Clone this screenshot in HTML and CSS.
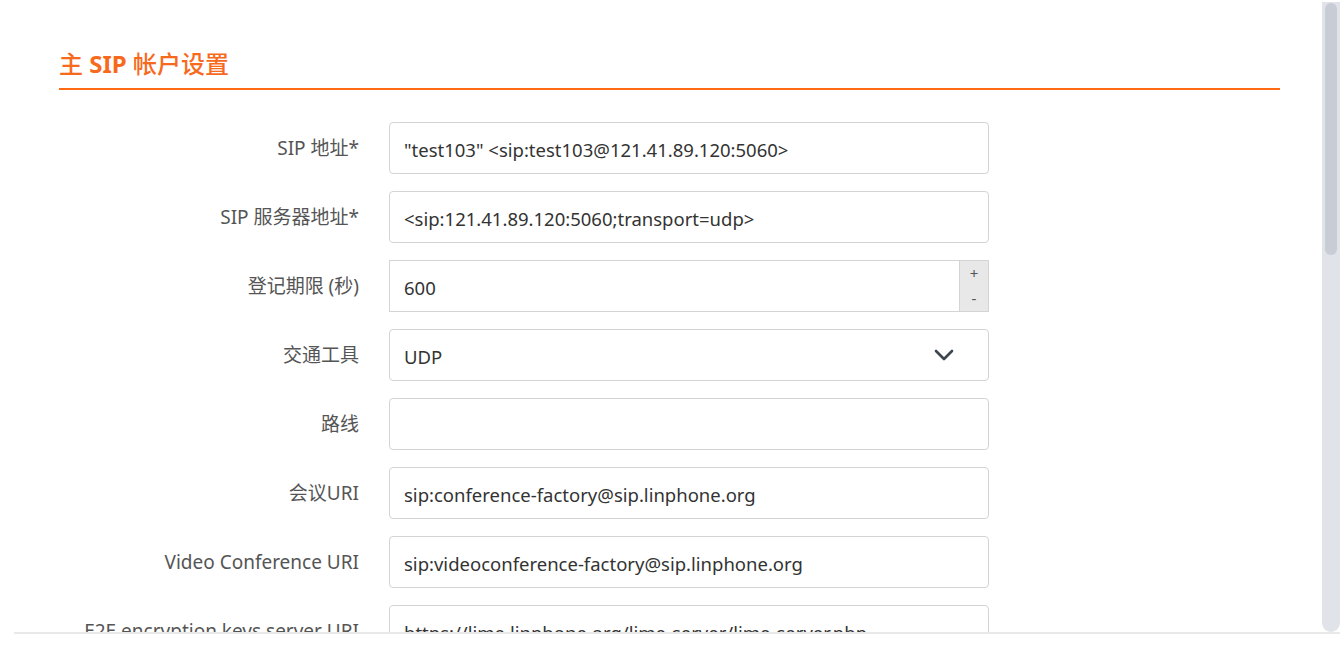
FILE: index.html
```html
<!DOCTYPE html>
<html lang="zh-CN">
<head>
    <meta charset="UTF-8">
    <title>主 SIP 帐户设置</title>
    <link rel="stylesheet" href="styles.css">
</head>
<body>
    <div class="frame">
        <div class="panel">
            <h2 class="section-title">主 <b>SIP</b> 帐户设置</h2>

            <div class="form">
                <div class="row">
                    <label class="label">SIP 地址*</label>
                    <div class="field"><span class="value">"test103" &lt;sip:test103@121.41.89.120:5060&gt;</span></div>
                </div>
                <div class="row">
                    <label class="label">SIP 服务器地址*</label>
                    <div class="field"><span class="value">&lt;sip:121.41.89.120:5060;transport=udp&gt;</span></div>
                </div>
                <div class="row">
                    <label class="label">登记期限 (秒)</label>
                    <div class="field field-number">
                        <span class="value">600</span>
                        <div class="spin">
                            <span>+</span>
                            <span>-</span>
                        </div>
                    </div>
                </div>
                <div class="row">
                    <label class="label">交通工具</label>
                    <div class="field field-select">
                        <span class="value">UDP</span>
                        <svg class="chevron" width="20" height="12" viewBox="0 0 20 12">
                            <path d="M2 2 L10 10 L18 2" fill="none" stroke="#3c4650" stroke-width="2.6" stroke-linecap="round" stroke-linejoin="round"/>
                        </svg>
                    </div>
                </div>
                <div class="row">
                    <label class="label">路线</label>
                    <div class="field"></div>
                </div>
                <div class="row">
                    <label class="label">会议URI</label>
                    <div class="field"><span class="value">sip:conference-factory@sip.linphone.org</span></div>
                </div>
                <div class="row">
                    <label class="label">Video Conference URI</label>
                    <div class="field"><span class="value">sip:videoconference-factory@sip.linphone.org</span></div>
                </div>
                <div class="row">
                    <label class="label">E2E encryption keys server URI</label>
                    <div class="field"><span class="value">https://lime.linphone.org/lime-server/lime-server.php</span></div>
                </div>
            </div>
        </div>
        <div class="scrollbar">
            <div class="thumb"></div>
        </div>
    </div>
</body>
</html>
```

FILE: styles.css
```css
body {
    margin: 0;
    background: #fff;
    font-family: "Noto Sans", "Noto Sans CJK SC", sans-serif;
}
.frame {
    display: flex;
    margin-left: 14px;
    width: 1326px;
    height: 634px;
    overflow: hidden;
    border-bottom: 2px solid #e9e9e9;
    box-sizing: border-box;
}
.panel {
    flex: 1;
    padding: 0 42px 0 45px;
}
.section-title {
    margin: 49px 0 0;
    padding-bottom: 9px;
    font-size: 24px;
    line-height: 30px;
    font-weight: 500;
    color: #f76a1e;
    border-bottom: 2px solid #ff6a12;
}
.section-title b {
    font-weight: 700;
}
.form {
    padding-top: 32px;
}
.row {
    display: flex;
    align-items: center;
    margin-bottom: 17px;
}
.label {
    width: 300px;
    margin-right: 30px;
    text-align: right;
    font-size: 19px;
    color: #555;
    line-height: 26px;
}
.field {
    display: flex;
    align-items: center;
    width: 600px;
    height: 52px;
    box-sizing: border-box;
    border: 1px solid #d4d4d4;
    border-radius: 4px;
    padding: 0 14px;
    font-size: 18.5px;
    color: #333;
    background: #fff;
}
.value {
    flex: 1;
    white-space: nowrap;
    overflow: hidden;
    padding-top: 2px;
}
.field-number {
    border-radius: 0;
    padding-right: 0;
}
.spin {
    display: flex;
    flex-direction: column;
    justify-content: space-between;
    align-items: center;
    width: 29px;
    height: 100%;
    box-sizing: border-box;
    padding: 1px 0 2px;
    background: #e8e8e8;
    border-left: 1px solid #d4d4d4;
    color: #555;
    font-size: 15px;
    line-height: 22px;
}
.field-select {
    padding-right: 34px;
}
.chevron {
    display: block;
}
.scrollbar {
    width: 18px;
    margin-top: 2px;
    background: #e0e3e7;
    border-radius: 0 0 9px 9px;
}
.thumb {
    width: 12px;
    height: 252px;
    margin: 1px auto 0;
    background: #c8ccd4;
    border-radius: 6px;
}
```
